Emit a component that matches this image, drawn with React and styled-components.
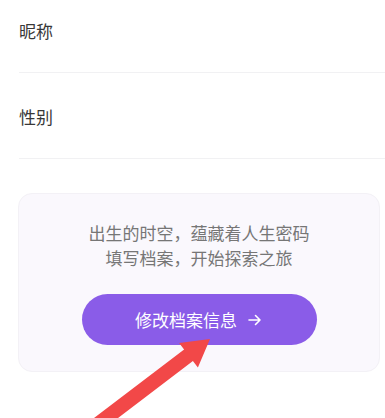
import styled, { createGlobalStyle } from "styled-components";

const GlobalStyle = createGlobalStyle`
	html, body {
		margin: 0;
		padding: 0;
		background: #ffffff;
	}
	body {
		font-family: "Noto Sans CJK SC", "Noto Sans", sans-serif;
	}
`;

const fields = ["昵称", "性别"];

const App = () => {
	return (
		<Page>
			<GlobalStyle />
			<Form>
				{fields.map((label) => (
					<Field key={label}>
						<Label>{label}</Label>
					</Field>
				))}
			</Form>
			<Card>
				<Intro>
					出生的时空，蕴藏着人生密码
					<br />
					填写档案，开始探索之旅
				</Intro>
				<EditButton>
					修改档案信息
					<svg width="16" height="16" viewBox="0 0 16 16" fill="none">
						<path
							d="M2 8h11M8.5 3.5L13 8l-4.5 4.5"
							stroke="#ffffff"
							strokeWidth="1.6"
							strokeLinecap="round"
							strokeLinejoin="round"
						/>
					</svg>
				</EditButton>
			</Card>
			<Pointer viewBox="0 0 385 418" width="385" height="418">
				<polygon
					points="210,339 179.1,343 184.1,349.5 80.6,428.2 89.4,439.8 192.9,361.1 197.9,367.6"
					fill="#f24848"
				/>
			</Pointer>
		</Page>
	);
};

export default App;

const Page = styled.div`
	position: relative;
	width: 385px;
	height: 418px;
	overflow: hidden;
	background: #ffffff;
`;

const Form = styled.div`
	display: flex;
	flex-direction: column;
	margin-left: 19px;
`;

const Field = styled.div`
	padding: 32px 0 29px;
	border-bottom: 1px solid #f1f1f3;

	&:first-child {
		padding-top: 19px;
	}
`;

const Label = styled.div`
	font-size: 17px;
	line-height: 24px;
	color: #383838;
`;

const Card = styled.div`
	margin: 34px 5px 0 18px;
	height: 179px;
	box-sizing: border-box;
	padding: 26px 0 0;
	background: #faf8fd;
	border: 1px solid #f3f1f6;
	border-radius: 14px;
	display: flex;
	flex-direction: column;
	align-items: center;
`;

const Intro = styled.p`
	margin: 0;
	font-size: 17px;
	line-height: 25px;
	color: #767676;
	text-align: center;
`;

const EditButton = styled.button`
	margin-top: 24px;
	width: 235px;
	height: 51px;
	border: none;
	border-radius: 26px;
	background: #8a5ce8;
	color: #ffffff;
	font-family: inherit;
	font-size: 17px;
	display: flex;
	align-items: center;
	justify-content: center;
	gap: 10px;
`;

const Pointer = styled.svg`
	position: absolute;
	left: 0;
	top: 0;
	pointer-events: none;
`;
